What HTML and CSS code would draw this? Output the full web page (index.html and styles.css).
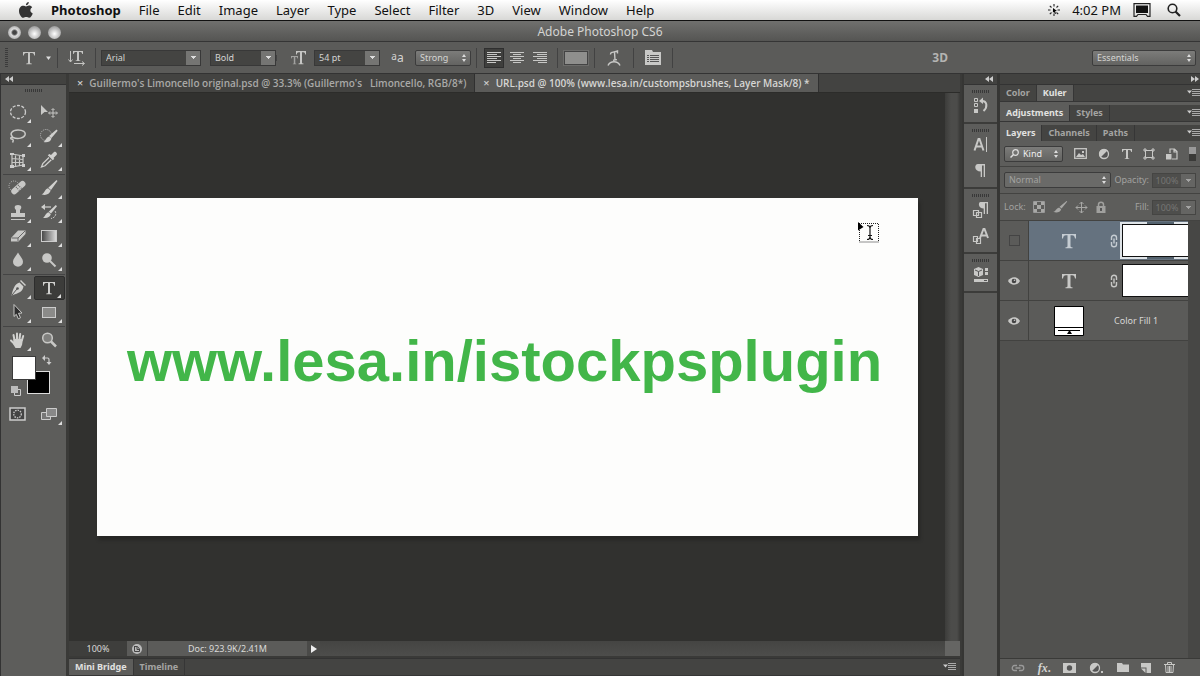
FILE: index.html
```html
<!DOCTYPE html>
<html lang="en">
<head>
<meta charset="utf-8">
<title>Adobe Photoshop CS6</title>
<link rel="stylesheet" href="styles.css">
</head>
<body>
<div class="app">
  <header class="menubar">
    <svg class="apple" width="16" height="18" viewBox="0 0 16 18"><path fill="#333" d="M10.8 1c.1 1.500-1.200 3.200-2.900 3.300C7.700 2.700 9.200 1.200 10.800 1zM8 5.400c.8 0 1.600-.8 3-.8 1.300 0 2.500.6 3.200 1.700-2.700 1.700-2.200 5 .5 6.100-.6 1.800-2 4.400-3.600 4.400-1.100 0-1.600-.7-2.900-.7s-1.800.7-2.900.7C3.300 16.800 1 13.200 1 10c0-3.300 2-5.300 4.200-5.300 1.200 0 2 .7 2.800.7z"/></svg>
    <nav class="menus">
      <button class="menu menu-app">Photoshop</button>
      <button class="menu">File</button>
      <button class="menu">Edit</button>
      <button class="menu">Image</button>
      <button class="menu">Layer</button>
      <button class="menu">Type</button>
      <button class="menu">Select</button>
      <button class="menu">Filter</button>
      <button class="menu">3D</button>
      <button class="menu">View</button>
      <button class="menu">Window</button>
      <button class="menu">Help</button>
    </nav>
    <div class="menu-extras">
      <svg width="12" height="12" viewBox="0 0 12 12"><path stroke="#222" stroke-width="1.100" d="M6 0v2.500M6 9.500V12M0 6h2.500M9.500 6H12M1.800 1.800l1.700 1.700M8.500 8.500l1.700 1.700M10.200 1.800L8.500 3.500M1.800 10.200l1.700-1.700"/><path d="M5 4l4 3-2 .3 1 2.200-1 .4-1-2.200-1.100 1z"/></svg>
      <span class="clock">4:02 PM</span>
      <svg width="18" height="14" viewBox="0 0 18 14"><path fill="none" stroke="#222" stroke-width="1.200" d="M1 .6h16v12.800h-2.500L13 11.500H5l-1.500 1.900H1z"/><path fill="#111" d="M3 2.500h12V10H3z"/></svg>
      <svg width="14" height="14" viewBox="0 0 14 14"><circle cx="5.500" cy="5.500" r="4.300" fill="none" stroke="#222" stroke-width="1.600"/><path stroke="#222" stroke-width="2.200" d="M8.500 8.500L13 13"/></svg>
    </div>
  </header>

  <div class="titlebar">
    <div class="lights"><button class="light light-edited" aria-label="Close"></button><button class="light" aria-label="Minimize"></button><button class="light" aria-label="Zoom"></button></div>
    <h1 class="title">Adobe Photoshop CS6</h1>
  </div>

  <div class="options">
    <span class="grip-v"></span>
    <button class="opt opt-tool" aria-label="Type tool presets"><svg width="30" height="16" viewBox="0 0 30 16"><path fill="#c6c6c4" d="M1 2h12v3.500h-.8C12 4 11.500 3 10 3H8v9.500c0 .8.500 1 1.800 1.100v.7H4.200v-.7C5.500 13.500 6 13.300 6 12.500V3H4C2.500 3 2 4 1.800 5.500H1z"/><path fill="#ddd" d="M24 6.500h5L26.500 10z"/></svg></button>
    <button class="opt opt-orient" aria-label="Toggle text orientation"><svg width="18" height="16" viewBox="0 0 18 16"><path fill="#c6c6c4" d="M5 1h10v3h-.7C14 2.700 13.600 2 12.500 2H11v7.500c0 .8.300 1 1.300 1v.6H7.700v-.6c1 0 1.300-.2 1.300-1V2H7.500C6.400 2 6 2.700 5.700 4H5z"/><path fill="none" stroke="#c6c6c4" d="M2.500 1v11M.5 9.500l2 2.500 2-2.500M6 13.500h10M14 11.500l2.500 2-2.500 2"/></svg></button>
    <label class="combo combo-family"><select class="select" aria-label="Font family"><option>Arial</option></select></label>
    <label class="combo combo-style"><select class="select" aria-label="Font style"><option>Bold</option></select></label>
    <span class="opt opt-size"><svg width="16" height="14" viewBox="0 0 16 14"><path fill="#c6c6c4" d="M5 0h10v3.500h-.8C14 2 13.500 1.200 12.300 1.200H11V11.500c0 .7.400.9 1.500 1v.7h-5v-.7c1.100-.1 1.500-.3 1.500-1V1.200H7.700C6.500 1.200 6 2 5.800 3.500H5z"/><path fill="#a2a2a0" d="M0 5h7v2.500h-.6C6.200 6.500 6 6 5 6h-.7v6c0 .5.200.7 1 .7v.5H1.800v-.5c.8 0 1-.2 1-.7V6H2C1 6 .8 6.500.6 7.500H0z"/></svg></span>
    <label class="combo combo-size"><select class="select" aria-label="Font size"><option>54 pt</option></select></label>
    <span class="opt opt-aa"><span class="aa-small">a</span>a</span>
    <label class="popup popup-aa"><select class="select" aria-label="Anti-aliasing"><option>Strong</option></select></label>
    <div class="aligns">
      <button class="align align-on" aria-label="Left align text"><svg width="14" height="12" viewBox="0 0 14 12"><path stroke="#c8c8c6" d="M0 .5h14M0 2.500h10M0 4.500h14M0 6.500h10M0 8.500h14M0 10.500h9"/></svg></button>
      <button class="align" aria-label="Center text"><svg width="14" height="12" viewBox="0 0 14 12"><path stroke="#c8c8c6" d="M0 .5h14M3 2.500h8M0 4.500h14M3 6.500h8M0 8.500h14M3 10.500h8"/></svg></button>
      <button class="align" aria-label="Right align text"><svg width="14" height="12" viewBox="0 0 14 12"><path stroke="#c8c8c6" d="M0 .5h14M4 2.500h10M0 4.500h14M4 6.500h10M0 8.500h14M5 10.500h9"/></svg></button>
    </div>
    <span class="opt opt-color"><button class="color-chip" aria-label="Text color"></button></span>
    <button class="opt opt-warp" aria-label="Create warped text"><svg width="14" height="16" viewBox="0 0 14 16"><path fill="none" stroke="#c8c8c6" stroke-width="1.500" d="M1 15.500c2.500-5 9.500-5 12 0"/><path fill="none" stroke="#c8c8c6" stroke-width="1.400" d="M3.500 4.500C3.500 2 5 2.500 10.500 1v2.500M7.500 2L8 10M6 10.200l4-.6"/></svg></button>
    <button class="opt opt-panel" aria-label="Character and paragraph panels"><svg width="16" height="15" viewBox="0 0 16 15"><path fill="#c8c8c6" d="M0 0h7l1 2h8v13H0z"/><path stroke="#555" d="M2 5.500h2M5 5.500h9M2 7.500h2M5 7.500h9M2 9.500h2M5 9.500h9M2 11.500h2M5 11.500h9"/></svg></button>
    <button class="opt opt-3d">3D</button>
    <label class="popup popup-ws"><select class="select" aria-label="Workspace"><option>Essentials</option></select></label>
  </div>

  <div class="workspace">
    <aside class="toolbox">
      <button class="strip strip-left" aria-label="Collapse tools"><svg width="8" height="6" viewBox="0 0 8 6"><path fill="#ccc" d="M4 0v6L0 3zM8 0v6L4 3z"/></svg></button>
      <span class="grip"></span>
      <div class="tools">
        <button class="tool more" aria-label="Elliptical marquee"><svg width="18" height="18" viewBox="0 0 18 18"><ellipse cx="9" cy="9" rx="7.500" ry="6.500" fill="none" stroke="#ccc" stroke-width="1.300" stroke-dasharray="3 1.500"/></svg></button>
        <button class="tool" aria-label="Move"><svg width="18" height="18" viewBox="0 0 18 18"><path fill="#c8c8c6" d="M1 2l7 7H4.500L1 12z"/><path fill="none" stroke="#c8c8c6" d="M13 6v8M9 10h8M11.500 7L13 5.500 14.500 7M11.500 13l1.500 1.500 1.500-1.500M10 8.500L8.500 10l1.500 1.500M16 8.500l1.500 1.500-1.500 1.500"/></svg></button>
        <button class="tool more" aria-label="Lasso"><svg width="18" height="18" viewBox="0 0 18 18"><path fill="none" stroke="#c8c8c6" stroke-width="1.500" d="M4 10C0 7 3 3 9 3c5 0 8 2 7 5s-7 4.500-12 2.500c-2-1-3 1-1.500 1.500s2.500 1 1 3.500"/></svg></button>
        <button class="tool more" aria-label="Quick selection"><svg width="20" height="18" viewBox="0 0 20 18"><circle cx="7" cy="8" r="5.500" fill="none" stroke="#bbb" stroke-dasharray="1 1"/><path fill="#d0d0ce" d="M17.500 2.500l1.200 1.300-6.200 7.200-2.500-2zM10 9.500l2.500 2c-1 3.500-4.500 4.300-8 3.500 2.500-1 2-4.500 5.500-5.500z"/></svg></button>
        <button class="tool more" aria-label="Perspective crop"><svg width="18" height="18" viewBox="0 0 18 18"><path fill="none" stroke="#c8c8c6" stroke-width="1.200" d="M3 3l11 2v9L3 16zM6.500 3.500v12M10.500 4v11M3 7.500l11 1M3 11.500h11"/><path fill="#ccc" d="M1 2h4v2H1zM13 3h3v3h-3zM1 14h4v3H1zM13 13h3v3h-3z"/></svg></button>
        <button class="tool more" aria-label="Eyedropper"><svg width="18" height="18" viewBox="0 0 18 18"><path fill="#d0d0ce" d="M11 4l3-3c1.500-1 4 1.500 2.500 3l-3 3 .8.800-1.500 1.500-5-5L9.300 3z"/><path fill="none" stroke="#d0d0ce" stroke-width="1.300" d="M9 6.500L2.800 12.500 1.500 16l3.500-1.200 6.300-6"/></svg></button>
        <span class="rule"></span>
        <button class="tool more" aria-label="Spot healing brush"><svg width="20" height="18" viewBox="0 0 20 18"><circle cx="6" cy="7" r="5" fill="none" stroke="#bbb" stroke-dasharray="1 1.200"/><rect x="2" y="6" width="17" height="6" rx="3" fill="#c8c8c6" transform="rotate(-42 10 9)"/><path stroke="#666" stroke-width="1.200" stroke-dasharray="1 1" d="M8 8l4 4M10 6l4 4"/></svg></button>
        <button class="tool more" aria-label="Brush"><svg width="18" height="18" viewBox="0 0 18 18"><path fill="#d0d0ce" d="M16.500 1l1 1-6.500 9-2.700-2.200zM8 9.300l2.700 2.300c-1 3.700-5.200 5.200-9.200 3.700 3-.5 3-5 6.500-6z"/></svg></button>
        <button class="tool more" aria-label="Clone stamp"><svg width="18" height="18" viewBox="0 0 18 18"><path fill="#c8c8c6" d="M9 2c4 0 4 3 2 5v3h5v4H2v-4h5V7C5 5 5 2 9 2z"/><path stroke="#c8c8c6" d="M2 16.500h14"/></svg></button>
        <button class="tool more" aria-label="History brush"><svg width="18" height="18" viewBox="0 0 18 18"><path fill="#d0d0ce" d="M15.800 2l1.200 1.200-6 7.300-2.300-1.800zM8.500 9.200l2.300 2c-1 3.300-4.300 4.300-7.800 3.500 2.500-1 2-4.500 5.500-5.500zM1 4l4-3v6z"/><path fill="none" stroke="#c8c8c6" stroke-width="1.300" d="M4 4h7"/><path fill="none" stroke="#c8c8c6" d="M15 8c2 3 0 7-4 7.500" stroke-dasharray="2 1"/></svg></button>
        <button class="tool more" aria-label="Eraser"><svg width="18" height="18" viewBox="0 0 18 18"><path fill="#c8c8c6" d="M9 3.500h7.500V7L9.500 14.500H2V11z"/><path fill="none" stroke="#666" d="M2.500 11h6.500l7-7M9 11v3"/></svg></button>
        <button class="tool more" aria-label="Gradient"><svg width="18" height="18" viewBox="0 0 18 18"><defs><linearGradient id="fade"><stop stop-color="#444"/><stop offset="1" stop-color="#ddd"/></linearGradient></defs><rect x="1.500" y="3.500" width="15" height="11" fill="url(#fade)" stroke="#ccc"/></svg></button>
        <button class="tool more" aria-label="Blur"><svg width="18" height="18" viewBox="0 0 18 18"><path fill="#c8c8c6" d="M9 1.500c2 4 5 6 5 9.300a5 5 0 0 1-10 0C4 7.500 7 5.500 9 1.500z"/></svg></button>
        <button class="tool more" aria-label="Dodge"><svg width="18" height="18" viewBox="0 0 18 18"><circle cx="7" cy="7" r="4.800" fill="#c8c8c6"/><path stroke="#c8c8c6" stroke-width="2" d="M10 10l5.500 5.500"/></svg></button>
        <span class="rule"></span>
        <button class="tool more" aria-label="Pen"><svg width="18" height="18" viewBox="0 0 18 18"><path fill="#d0d0ce" d="M11 2l5 5 1-1-5-5zM10.500 3.500l4 4c-1 5-4 6.500-12 9C4 10 5.500 5 10.500 3.500z"/><path stroke="#555" d="M3 16l5-6"/><circle cx="8.500" cy="9.500" r="1.300" fill="#555"/></svg></button>
        <button class="tool more tool-on" aria-label="Type"><svg width="18" height="18" viewBox="0 0 18 18"><path fill="#d0d0ce" d="M3 3h12v3.700h-.8C14 5 13.500 4.100 12 4.100h-2v9.400c0 .8.500 1 1.800 1.100v.6H6.200v-.6C7.500 14.500 8 14.300 8 13.500V4.100H6C4.500 4.100 4 5 3.800 6.700H3z"/></svg></button>
        <button class="tool more" aria-label="Path selection"><svg width="18" height="18" viewBox="0 0 18 18"><path fill="#2e2e2e" stroke="#c8c8c6" d="M5 1.500l8 8.500-3.500.3 2 4.500-2.200 1-2-4.500L5 13.500z"/></svg></button>
        <button class="tool more" aria-label="Rectangle"><svg width="18" height="18" viewBox="0 0 18 18"><rect x="2.500" y="4.500" width="13" height="10" fill="#8b8b89" stroke="#ccc"/></svg></button>
        <span class="rule"></span>
        <button class="tool more" aria-label="Hand"><svg width="18" height="18" viewBox="0 0 18 18"><path fill="none" stroke="#d0d0ce" stroke-width="2" stroke-linecap="round" d="M5.500 9L4.500 4M8 8V2.500M10.500 8l.7-5M13 9l1.200-4M2 9.500l3 3"/><path fill="#d0d0ce" d="M4.500 8H14l-1 6-1.500 3h-5L4 13z"/></svg></button>
        <button class="tool" aria-label="Zoom"><svg width="18" height="18" viewBox="0 0 18 18"><circle cx="7.500" cy="7" r="4.800" fill="#80807e" stroke="#c8c8c6" stroke-width="1.500"/><path stroke="#c8c8c6" stroke-width="2.500" d="M11 10.500l5 5"/></svg></button>
      </div>
      <div class="swatches">
        <button class="swatch swatch-back" aria-label="Background color"></button>
        <button class="swatch swatch-fore" aria-label="Foreground color"></button>
        <svg class="swap" width="10" height="10" viewBox="0 0 10 10"><path fill="none" stroke="#ccc" stroke-width="1.200" d="M2 3h3.500c1 0 1.500.5 1.500 1.500V8"/><path fill="#ccc" d="M0 3l3-3v6zM7 10L4.500 7h5z"/></svg>
        <svg class="reset" width="10" height="10" viewBox="0 0 10 10"><path fill="none" stroke="#ccc" d="M3.500 3.500h6v6h-6z"/><path fill="#bbb" d="M0 0h7v7H0z"/></svg>
      </div>
      <div class="tools">
        <button class="tool" aria-label="Quick mask"><svg width="18" height="18" viewBox="0 0 18 18"><rect x="1" y="3" width="15" height="12" fill="#444" stroke="#ccc" stroke-width="1.500"/><circle cx="8.500" cy="9" r="3.800" fill="none" stroke="#ccc" stroke-width="1.300" stroke-dasharray="1.500 1"/></svg></button>
        <button class="tool more" aria-label="Screen mode"><svg width="18" height="18" viewBox="0 0 18 18"><path fill="#777" stroke="#ccc" d="M1.500 7.500h9v7h-9z"/><path fill="#888" stroke="#ccc" d="M6.500 3.500h10v8h-10z"/></svg></button>
      </div>
    </aside>

    <main class="center">
      <div class="doc-tabs">
        <button class="doc-tab"><span class="x">×</span><span class="doc-name">Guillermo's Limoncello original.psd @ 33.3% (Guillermo's &nbsp; Limoncello, RGB/8*)</span></button>
        <button class="doc-tab doc-tab-on"><span class="x">×</span><span class="doc-name">URL.psd @ 100% (www.lesa.in/custompsbrushes, Layer Mask/8) *</span></button>
      </div>
      <div class="stage">
        <div class="canvas">
          <div class="artboard">
            <p class="headline">www.lesa.in/istockpsplugin</p>
            <svg class="cursor" width="21" height="21" viewBox="0 0 21 21"><path fill="none" stroke="#222" stroke-dasharray="1 1" d="M1 1.500h19.500v18.500H1.500V1"/><path d="M0 0l5.500 5L0 8.500z"/><path fill="none" stroke="#111" stroke-width="1.200" d="M9 3.500c2 0 3 1 3 2.500v9c0 1.500-1 2.500-3 2.500M15 3.500c-2 0-3 1-3 2.500M15 17.500c-2 0-3-1-3-2.500M10 13.500h4"/></svg>
          </div>
        </div>
        <div class="scroll-v"></div>
      </div>
      <div class="status">
        <input class="zoom" aria-label="Zoom level" value="100%">
        <span class="status-icon"><svg width="10" height="10" viewBox="0 0 10 10"><circle cx="5" cy="5" r="5" fill="#bbb"/><path fill="none" stroke="#444" d="M2.500 2v5.500h5V5L5.500 2.500H2.500M5 3v2.500h2.500"/></svg></span>
        <span class="doc-size">Doc: 923.9K/2.41M</span>
        <button class="status-more" aria-label="Status options"><svg width="6" height="8" viewBox="0 0 6 8"><path fill="#eee" d="M0 0l6 4-6 4z"/></svg></button>
        <span class="scroll-h"></span>
        <span class="corner"></span>
      </div>
      <div class="tabs tabs-bottom">
        <button class="tab tab-on">Mini Bridge</button><button class="tab">Timeline</button>
        <svg class="flyout" width="13" height="8" viewBox="0 0 13 8"><path fill="#ccc" d="M0 1.500h5L2.500 4.500z"/><path stroke="#aaa" d="M5 .5h8M5 2.500h8M5 4.500h8M5 6.500h8"/></svg>
      </div>
    </main>

    <aside class="dock">
      <button class="strip" aria-label="Expand dock"><svg width="8" height="6" viewBox="0 0 8 6"><path fill="#ccc" d="M4 0v6L0 3zM8 0v6L4 3z"/></svg></button>
      <div class="group"><span class="grip"></span>
        <button class="dock-btn" aria-label="History"><svg width="16" height="18" viewBox="0 0 16 18"><path fill="none" stroke="#c8c8c6" d="M1.500 1.500h3v3h-3zM1.500 6.500h3v3h-3z"/><path fill="#c8c8c6" d="M1 12h4v4H1zM6 4l4-3.500V7z"/><path fill="none" stroke="#c8c8c6" stroke-width="2" d="M9 4c5 0 6 6 1.500 10"/></svg></button></div>
      <div class="group"><span class="grip"></span>
        <button class="dock-btn" aria-label="Character"><svg width="16" height="18" viewBox="0 0 16 18"><path fill="none" stroke="#c8c8c6" stroke-width="2" d="M1.500 14.500L5.500 3h1l4 11.500M3 10.500h6"/><path stroke="#c8c8c6" d="M13.500 1v15"/></svg></button>
        <button class="dock-btn" aria-label="Paragraph"><svg width="16" height="18" viewBox="0 0 16 18"><path fill="#c8c8c6" d="M5 2h7v13h-1.300V3.500H9V15H7.700V9.500C1 9.500 1 2 5 2z"/></svg></button></div>
      <div class="group"><span class="grip"></span>
        <button class="dock-btn" aria-label="Paragraph styles"><svg width="18" height="18" viewBox="0 0 18 18"><path fill="#c8c8c6" d="M8.500 1H16v12h-1.300V2.300H13V13h-1.300V7.500C6 7.500 6 1 8.500 1z"/><path fill="none" stroke="#c8c8c6" stroke-width="1.200" d="M1.500 9.500h5v5h-5zM4.500 11.500h5v5h-5z"/></svg></button>
        <button class="dock-btn" aria-label="Character styles"><svg width="18" height="18" viewBox="0 0 18 18"><path fill="none" stroke="#c8c8c6" stroke-width="2" d="M8 11L11.500 2h1L16 11M9.500 8.500h5.500"/><path fill="none" stroke="#c8c8c6" stroke-width="1.200" d="M1.500 9.500h4v5h-4zM4.500 11.500h4v5h-4z"/></svg></button></div>
      <div class="group"><span class="grip"></span>
        <button class="dock-btn" aria-label="Properties"><svg width="16" height="18" viewBox="0 0 16 18"><path fill="#c8c8c6" d="M5.500 1l4.500 2v6l-4.500 2L1 9V3zM12 2h3v3h-3zM12 6h3v3h-3zM1 13h14v3H1z"/><path fill="none" stroke="#555" d="M2 4l3.500 1.500L9 4M5.500 5.500V10M11 14.500h3"/></svg></button></div>
    </aside>

    <aside class="panels">
      <button class="strip" aria-label="Collapse panels"><svg width="8" height="6" viewBox="0 0 8 6"><path fill="#ccc" d="M0 0v6l4-3zM4 0v6l4-3z"/></svg></button>
      <div class="tabs"><button class="tab">Color</button><button class="tab tab-on">Kuler</button><svg class="flyout" width="13" height="8" viewBox="0 0 13 8"><path fill="#ccc" d="M0 1.500h5L2.500 4.500z"/><path stroke="#aaa" d="M5 .5h8M5 2.500h8M5 4.500h8M5 6.500h8"/></svg></div>
      <div class="tabs"><button class="tab tab-on">Adjustments</button><button class="tab">Styles</button><svg class="flyout" width="13" height="8" viewBox="0 0 13 8"><path fill="#ccc" d="M0 1.500h5L2.500 4.500z"/><path stroke="#aaa" d="M5 .5h8M5 2.500h8M5 4.500h8M5 6.500h8"/></svg></div>
      <div class="tabs tabs-open"><button class="tab tab-on">Layers</button><button class="tab">Channels</button><button class="tab">Paths</button><svg class="flyout" width="13" height="8" viewBox="0 0 13 8"><path fill="#ccc" d="M0 1.500h5L2.500 4.500z"/><path stroke="#aaa" d="M5 .5h8M5 2.500h8M5 4.500h8M5 6.500h8"/></svg></div>
      <div class="row row-filter">
        <label class="popup popup-kind"><svg class="kind-icon" width="9" height="9" viewBox="0 0 9 9"><circle cx="5.500" cy="3.500" r="2.800" fill="none" stroke="#ddd" stroke-width="1.200"/><path stroke="#ddd" stroke-width="1.500" d="M3.500 5.500L.5 8.500"/></svg><select class="select" aria-label="Filter kind"><option>Kind</option></select></label>
        <div class="filters">
          <button class="ico" aria-label="Pixel layers"><svg width="13" height="11" viewBox="0 0 13 11"><rect x=".7" y=".7" width="11.600" height="9.600" fill="#555" stroke="#c8c8c6" stroke-width="1.300"/><path fill="#c8c8c6" d="M2 9l3-4 2 2 2-1 2 3zM8 3h2v2H8z"/></svg></button>
          <button class="ico" aria-label="Adjustment layers"><svg width="12" height="12" viewBox="0 0 12 12"><circle cx="6" cy="6" r="4.500" fill="#555" stroke="#c8c8c6" stroke-width="1.300"/><path fill="#c8c8c6" d="M2.500 9.500l7-7A4.800 4.800 0 0 0 2.500 9.500z"/></svg></button>
          <button class="ico" aria-label="Type layers"><svg width="12" height="12" viewBox="0 0 12 12"><path fill="#c8c8c6" d="M1 1h10v3h-.7C10 2.700 9.600 2 8.500 2H7v7.500c0 .7.300 1 1.300 1v.5H3.700v-.5c1 0 1.300-.3 1.300-1V2H3.500C2.400 2 2 2.700 1.700 4H1z"/></svg></button>
          <button class="ico" aria-label="Shape layers"><svg width="12" height="12" viewBox="0 0 12 12"><path fill="none" stroke="#c8c8c6" d="M2.500 2.500h7v7h-7zM1 1h2v2H1zM9 1h2v2H9zM1 9h2v2H1zM9 9h2v2H9z"/></svg></button>
          <button class="ico" aria-label="Smart objects"><svg width="12" height="12" viewBox="0 0 12 12"><path fill="none" stroke="#c8c8c6" stroke-width="1.200" d="M4 5V1h4.500L11 3.500V11H6M8 1v3h3"/><path fill="#c8c8c6" d="M0 6h5.500v5.500H0z"/></svg></button>
        </div>
        <button class="toggle" aria-label="Toggle filtering"></button>
      </div>
      <div class="row row-dim">
        <label class="popup popup-blend"><select class="select" aria-label="Blend mode" disabled><option>Normal</option></select></label>
        <label class="field">Opacity: <span class="numbox"><input class="num" value="100%" disabled></span></label>
      </div>
      <div class="row row-dim">
        <div class="locks"><span>Lock:</span>
          <button class="ico" aria-label="Lock transparency"><svg width="12" height="12" viewBox="0 0 12 12"><path fill="none" stroke="#999" d="M.5.500h11v11H.5z"/><path fill="#a8a8a6" d="M1 1h3v3H1zM8 1h3v3H8zM4 4h4v4H4zM1 8h3v3H1zM8 8h3v3H8z"/></svg></button>
          <button class="ico" aria-label="Lock pixels"><svg width="16" height="14" viewBox="0 0 18 16"><path fill="#a8a8a6" d="M16.500 1l.8.800-6.500 8-2.300-2zM8 8.500l2.300 2c-1 3.500-5 4.500-9 3 3-.5 3-4 6.700-5z"/></svg></button>
          <button class="ico" aria-label="Lock position"><svg width="13" height="13" viewBox="0 0 13 13"><path fill="none" stroke="#a8a8a6" d="M6.500 1v11M1 6.500h11M4.500 3l2-2 2 2M4.500 10l2 2 2-2M3 4.500l-2 2 2 2M10 4.500l2 2-2 2"/></svg></button>
          <button class="ico" aria-label="Lock all"><svg width="12" height="12" viewBox="0 0 12 12"><path fill="#a0a09e" d="M1.500 5h9v7h-9z"/><path fill="none" stroke="#a0a09e" stroke-width="1.500" d="M3.500 5V3.500c0-3 5-3 5 0V5"/><path fill="#555" d="M5 7h2v3H5z"/></svg></button>
        </div>
        <label class="field">Fill: <span class="numbox"><input class="num" value="100%" disabled></span></label>
      </div>
      <div class="layers">
        <div class="layer layer-on">
          <label class="eye"><input type="checkbox" class="vis" aria-label="Show layer 1"></label>
          <div class="layer-main"><span class="thumb"><svg width="16" height="16" viewBox="0 0 16 16"><path fill="#c5ccd2" d="M1 1h14v4.500h-1C13.500 3 13 2.300 11 2.300H9.500V13c0 1 .4 1.200 2 1.300v.9h-7v-.9c1.600-.1 2-.3 2-1.300V2.300H5C3 2.300 2.500 3 2 5.500H1z"/></svg></span>
          <svg class="link" width="8" height="14" viewBox="0 0 8 14"><path fill="none" stroke="#c5ccd2" stroke-width="1.400" d="M1.500 6V3.500c0-3 5-3 5 0V6M1.500 8v2.500c0 3 5 3 5 0V8M4 4.500v5"/></svg>
          <span class="mask-frame"><span class="mask"></span></span></div>
        </div>
        <div class="layer">
          <label class="eye"><input type="checkbox" class="vis vis-on" checked aria-label="Show layer 2"><svg class="eye-icon" width="12" height="10" viewBox="0 0 12 10"><path fill="#c8c8c6" d="M0 5c3-5 9-5 12 0-3 5-9 5-12 0z"/><circle cx="6" cy="5" r="2.300" fill="#444"/><circle cx="6.500" cy="4.300" r=".8" fill="#ccc"/></svg></label>
          <div class="layer-main"><span class="thumb"><svg width="16" height="16" viewBox="0 0 16 16"><path fill="#c8c8c6" d="M1 1h14v4.500h-1C13.500 3 13 2.300 11 2.300H9.500V13c0 1 .4 1.200 2 1.300v.9h-7v-.9c1.600-.1 2-.3 2-1.300V2.300H5C3 2.300 2.500 3 2 5.500H1z"/></svg></span>
          <svg class="link" width="8" height="14" viewBox="0 0 8 14"><path fill="none" stroke="#c8c8c6" stroke-width="1.400" d="M1.500 6V3.500c0-3 5-3 5 0V6M1.500 8v2.500c0 3 5 3 5 0V8M4 4.500v5"/></svg>
          <span class="mask-frame mask-plain"><span class="mask"></span></span></div>
        </div>
        <div class="layer">
          <label class="eye"><input type="checkbox" class="vis vis-on" checked aria-label="Show Color Fill 1"><svg class="eye-icon" width="12" height="10" viewBox="0 0 12 10"><path fill="#c8c8c6" d="M0 5c3-5 9-5 12 0-3 5-9 5-12 0z"/><circle cx="6" cy="5" r="2.300" fill="#444"/><circle cx="6.500" cy="4.300" r=".8" fill="#ccc"/></svg></label>
          <div class="layer-main"><span class="thumb"><svg width="30" height="30" viewBox="0 0 30 30"><path fill="#fff" stroke="#000" d="M.5.500h29v29H.5z"/><path stroke="#000" d="M0 21.500h30M4 24.500h22"/><path d="M13 28h5l-2.500-4z"/></svg></span>
          <span class="layer-name">Color Fill 1</span></div>
        </div>
      </div>
      <div class="panel-foot">
        <button class="ico" aria-label="Link layers"><svg width="14" height="8" viewBox="0 0 14 8"><path fill="none" stroke="#999" stroke-width="1.300" d="M6 1.500H3.500c-3 0-3 5 0 5H6M8 1.500h2.500c3 0 3 5 0 5H8M4.500 4h5"/></svg></button>
        <button class="ico fx" aria-label="Layer style">fx<span class="dot">.</span></button>
        <button class="ico" aria-label="Add mask"><svg width="13" height="10" viewBox="0 0 13 10"><path fill="#c8c8c6" d="M0 0h13v10H0z"/><circle cx="6.500" cy="5" r="2.700" fill="#555"/></svg></button>
        <button class="ico" aria-label="New adjustment"><svg width="15" height="12" viewBox="0 0 15 12"><circle cx="6" cy="6" r="4.500" fill="#555" stroke="#c8c8c6" stroke-width="1.300"/><path fill="#c8c8c6" d="M2.500 9.500l7-7A4.800 4.800 0 0 0 2.500 9.500zM12 9h2v2h-2z"/></svg></button>
        <button class="ico" aria-label="New group"><svg width="12" height="9" viewBox="0 0 12 9"><path fill="#c8c8c6" d="M0 0h5l1 1.500h6V9H0z"/></svg></button>
        <button class="ico" aria-label="New layer"><svg width="10" height="10" viewBox="0 0 10 10"><path fill="#c8c8c6" d="M0 0h10v10H5.500V4.500H0z"/><path fill="#c8c8c6" d="M0 5.500h4.500V10z"/></svg></button>
        <button class="ico" aria-label="Delete layer"><svg width="11" height="11" viewBox="0 0 11 11"><path fill="none" stroke="#c8c8c6" d="M0 2.500h11M3.500 2V.5h4V2M1.500 3l.5 7.500h7L9.500 3M4 4v6M5.500 4v6M7 4v6"/></svg></button>
      </div>
    </aside>
  </div>
</div>
</body>
</html>
```
FILE: styles.css
```css
* { box-sizing: border-box; }

body {
  margin: 0;
  font: 9px/12px "Noto Sans", "Open Sans", sans-serif;
  color: #d4d4d2;
  background: #2a2a2a;
}

button, select, input {
  margin: 0;
  padding: 0;
  border: 0;
  border-radius: 0;
  background: none;
  color: inherit;
  font: inherit;
}

svg { display: block; flex: none; }

.app {
  display: flex;
  flex-direction: column;
  min-height: 100vh;
}

/* System menu bar */
.menubar {
  display: flex;
  align-items: center;
  height: 21px;
  padding: 0 19px 0 18px;
  color: #111;
  background: linear-gradient(#fff, #d8d8d6);
  border-bottom: 1px solid #111;
}
.menus { display: flex; gap: 18px; margin-left: 17px; }
.menu { font-size: 13px; line-height: 20px; }
.menu-app { font-weight: 700; }
.menu-extras { display: flex; align-items: center; gap: 12px; margin-left: auto; }
.clock { font-size: 13px; }
.menu-extras svg:last-child { margin-left: 4px; }

/* Window title */
.titlebar {
  display: grid;
  grid-template-columns: 1fr auto 1fr;
  align-items: center;
  height: 21px;
  padding: 2px 8px 0;
  background: linear-gradient(#70706e, #555553);
  border-bottom: 1px solid #353535;
}
.lights { display: flex; gap: 7px; }
.light {
  width: 13px;
  height: 13px;
  border-radius: 50%;
  background: radial-gradient(circle at 50% 60%, #fff, #aaa 65%, #777);
}
.light-edited { background: radial-gradient(circle, #444 20%, #ddd 40%, #888); }
.title { margin: 0; font-size: 12px; font-weight: 400; line-height: 18px; }

/* Options bar */
.options {
  display: flex;
  align-items: center;
  height: 32px;
  padding-right: 4px;
  background: #5b5b59;
  border-bottom: 1px solid #333;
}
.grip-v {
  width: 3px;
  height: 20px;
  margin-left: 5px;
  background: repeating-linear-gradient(#3b3b3b 0 1px, transparent 1px 2px);
}
.opt {
  display: flex;
  align-items: center;
  justify-content: center;
  height: 20px;
  border-right: 1px solid #424242;
}
.opt-tool { width: 50px; padding-left: 8px; }
.opt-orient { width: 38px; }
.opt-size { width: 31px; border: 0; }
.opt-aa { width: 35px; border: 0; font-size: 12px; }
.aa-small { font-size: 10px; padding-bottom: 4px; }
.opt-color { width: 37px; }
.opt-warp { width: 39px; }
.opt-panel { width: 39px; }
.opt-3d { margin-left: auto; margin-right: 144px; border: 0; font-size: 12px; font-weight: 700; color: #b4b4b2; }
.color-chip { width: 24px; height: 14px; background: #8f8f8d; border: 1px solid #444; box-shadow: 0 0 0 1px #6c6c6a; }

.combo, .popup { position: relative; display: flex; align-items: center; height: 16px; }
.select {
  width: 100%;
  height: 100%;
  padding-left: 4px;
  appearance: none;
  opacity: 1;
}
.combo { background: #444442; border: 1px solid #383838; }
.combo::after, .numbox::after {
  content: "";
  position: absolute;
  right: 0;
  top: 0;
  bottom: 0;
  width: 14px;
  background:
    linear-gradient(#ddd, #ddd) center 5px / 5px 1px no-repeat,
    linear-gradient(#ddd, #ddd) center 6px / 3px 1px no-repeat,
    linear-gradient(#ddd, #ddd) center 7px / 1px 1px no-repeat,
    #757573;
  pointer-events: none;
}
.numbox::after { opacity: .6; }
.combo-family { width: 100px; margin-left: 5px; }
.combo-style { width: 66px; margin: 0 7px 0 9px; box-shadow: 6px 0 0 -5px #424242; }
.combo-size { width: 66px; }
.popup {
  background: linear-gradient(#7c7c7a, #636361);
  border: 1px solid #3c3c3c;
  border-radius: 2px;
}
.popup::before, .popup::after {
  content: "";
  position: absolute;
  right: 4px;
  border: 2px solid transparent;
  pointer-events: none;
}
.popup::before { top: 1px; border-bottom: 3px solid #ddd; }
.popup::after { bottom: 1px; border-top: 3px solid #ddd; }
.popup-aa { width: 56px; margin-right: 5px; }
.popup-ws { width: 104px; }

.aligns { display: flex; gap: 3px; padding: 0 7px; border-left: 1px solid #424242; border-right: 1px solid #424242; }
.align { display: grid; place-items: center; width: 20px; height: 20px; }
.align-on { background: #3f3f3d; border: 1px solid #2f2f2f; }

/* Main area */
.workspace {
  flex: 1;
  display: grid;
  grid-template-columns: 69px 1fr 38px 200px;
}
.strip {
  display: flex;
  align-items: center;
  justify-content: flex-end;
  flex: none;
  width: 100%;
  height: 11px;
  padding: 0 4px;
  background: #424240;
  border-bottom: 1px solid #333;
}
.panels > .strip { padding-right: 1px; }
.strip-left { justify-content: flex-start; }
.grip {
  display: block;
  width: 18px;
  height: 3px;
  margin: 0 auto;
  background: repeating-linear-gradient(90deg, #383838 0 1px, transparent 1px 2px);
}

/* Toolbox */
.toolbox {
  background: #5d5d5b;
  border-left: 1px solid #333;
  border-right: 3px solid #3a3a38;
}
.toolbox > .grip { margin: 4px auto 8px; }
.tools { display: grid; grid-template-columns: 31px 31px; justify-content: center; }
.tool { position: relative; display: grid; place-items: center; height: 24px; }
.tool-on { background: #3c3c3a; border: 1px solid #2d2d2d; border-radius: 2px; }
.more::after {
  content: "";
  position: absolute;
  right: 3px;
  bottom: 1px;
  border: 2px solid #ddd;
  border-top-color: transparent;
  border-left-color: transparent;
}
.rule { grid-column: 1 / -1; height: 4px; background: linear-gradient(#444, #444) 0 2px / 100% 1px no-repeat; }
.swatches { position: relative; height: 50px; }
.swatch { position: absolute; width: 24px; height: 24px; border: 1px solid #3a3a3a; }
.swatch-fore { left: 11px; top: 4px; background: #fff; }
.swatch-back { left: 26px; top: 19px; width: 23px; height: 23px; background: #000; border: 1px solid #ddd; }
.swap { position: absolute; left: 41px; top: 3px; }
.reset { position: absolute; left: 10px; top: 34px; }

/* Document */
.center { display: flex; flex-direction: column; min-width: 0; background: #3a3a38; border-right: 2px solid #3a3a38; }
.doc-tabs { display: flex; height: 19px; background: #434341; border-bottom: 1px solid #2c2c2a; }
.doc-tab {
  display: flex;
  align-items: center;
  gap: 6px;
  padding: 0 8px;
  font: 600 10px/12px "Open Sans", "Noto Sans", sans-serif;
  color: #a9a9a7;
  white-space: nowrap;
  border-right: 1px solid #303030;
}
.doc-tab-on { background: #5b5b59; color: #d6d6d4; }
.x { font-size: 11px; color: #ccc; }
.stage { flex: 1; display: flex; }
.canvas { flex: 1; display: flex; align-items: center; padding: 0 27px 0 28px; background: #31312f; }
.artboard {
  position: relative;
  flex: 1;
  display: grid;
  place-items: center;
  aspect-ratio: 821 / 338;
  background: #fdfdfc;
  box-shadow: 2px 4px 3px #262624;
}
.headline {
  margin: 0;
  padding: 0 6px 12px 0;
  font: 700 58px/64px "Liberation Sans", Arial, sans-serif;
  color: #42b649;
  white-space: nowrap;
}
.cursor { position: absolute; right: 39px; top: 24px; }
.scroll-v { width: 15px; background: linear-gradient(90deg, #3c3c3a, #4c4c4a 40%, #4c4c4a 80%, #3a3a38); }

.status { display: flex; height: 15px; color: #dadad8; background: #3e3e3c; }
.zoom { width: 58px; text-align: center; }
.status-icon { display: grid; place-items: center; width: 21px; background: #5b5b59; border-right: 1px solid #3d3d3d; }
.doc-size { width: 159px; line-height: 15px; text-align: center; background: #5b5b59; }
.status-more { display: grid; place-items: center; width: 13px; background: #4a4a48; }
.scroll-h { flex: 1; background: linear-gradient(#454543, #4d4d4b); }
.corner { width: 15px; background: #656563; }

/* Panel tabs */
.tabs {
  display: flex;
  align-items: stretch;
  height: 17px;
  margin-bottom: 3px;
  background: #444442;
  border-bottom: 1px solid #363636;
}
.tab { padding: 0 6px; font-weight: 700; color: #a4a4a2; border-right: 1px solid #363636; }
.tab-on { color: #e2e2e0; background: #5d5d5b; }
.flyout { margin: auto 0 auto auto; }
.tabs-bottom { height: 18px; margin: 2px 0 0; border-top: 1px solid #333; }
.tabs-bottom .flyout { margin-right: 4px; }
.tabs-open { height: 16px; margin-bottom: 0; border-bottom: 0; }

/* Icon dock */
.dock { background: #5d5d5b; border: solid #363634; border-width: 0 3px 0 2px; }
.group { padding: 5px 0 3px; border-bottom: 2px solid #3c3c3a; }
.dock-btn { display: grid; place-items: center; width: 100%; height: 26px; }

/* Layers panel */
.panels { display: flex; flex-direction: column; background: #5d5d5b; }
.row {
  display: flex;
  align-items: center;
  justify-content: space-between;
  height: 26px;
  padding: 0 4px;
  border-bottom: 1px solid #434341;
}
.ico { display: grid; place-items: center; }
.popup-kind { width: 59px; padding-left: 5px; color: #eee; }
.filters { display: flex; align-items: center; justify-content: space-between; width: 104px; }
.toggle { width: 7px; height: 14px; background: linear-gradient(#999 50%, #3a3a38 50%); }
.row-dim { height: 27px; color: #a2a2a0; }
.row-dim .popup { background: #6a6a68; }
.popup-blend { width: 107px; }
.field { display: flex; align-items: center; gap: 3px; }
.numbox { position: relative; display: flex; width: 44px; height: 15px; background: #4e4e4c; border: 1px solid #454543; }
.num { width: 28px; height: 100%; text-align: center; color: #757573; }
.locks { display: flex; align-items: center; gap: 7px; }

.layers { flex: 1; background: #51514f; border-right: 12px solid #474745; }
.layer {
  display: grid;
  grid-template-columns: 29px 1fr;
  height: 40px;
  background: #5b5b59;
  border-bottom: 1px solid #424240;
}
.eye { display: grid; place-items: center; border-right: 1px solid #424240; }
.eye > * { grid-area: 1 / 1; }
.vis { width: 11px; height: 11px; appearance: none; border: 1px solid #444; }
.vis-on { border: 0; }
.eye-icon { pointer-events: none; }
.layer-main { display: flex; align-items: center; min-width: 0; }
.layer-on .layer-main { background: #65727f; }
.thumb { display: grid; place-items: center; flex: none; width: 79px; }
.link { margin: 0 2px; }
.mask-frame {
  flex: 1;
  padding: 2px 0 2px 2px;
  background: linear-gradient(90deg, #dfe4e8 27px, #55636f 27px 54px, #dfe4e8 54px);
}
.mask-plain { background: none; }
.mask { display: block; height: 33px; background: #fff; border: 1px solid #111; border-right: 0; }
.layer-name { padding-left: 6px; color: #d8d8d6; }
.panel-foot {
  display: flex;
  align-items: center;
  justify-content: space-between;
  height: 18px;
  padding: 0 25px 0 11px;
  border-top: 1px solid #3a3a38;
}
.fx { display: block; font: italic 700 12px/14px "Liberation Serif", serif; }
.dot { font-style: normal; }
```
